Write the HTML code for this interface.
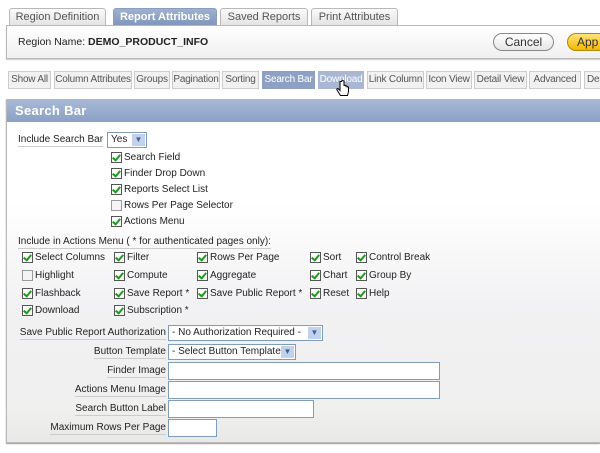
<!DOCTYPE html>
<html><head><meta charset="utf-8"><style>
*{box-sizing:border-box;margin:0;padding:0}
html,body{width:600px;height:453px;overflow:hidden}
body{background:#fff;font-family:"Liberation Sans",Arial,sans-serif;font-size:10px;color:#222;position:relative}
.a{position:absolute;white-space:nowrap}
.tab{position:absolute;top:8px;height:18px;border:1px solid #b8b8b8;border-bottom:none;border-radius:3px 3px 0 0;background:linear-gradient(#fafafa,#e2e2e2);color:#555;font-size:11px;text-align:center;line-height:17px}
.tab.on{background:linear-gradient(#9fb1cf,#7f95bb);color:#fff;font-weight:bold;border-color:#8a9cc0}
.hdr{position:absolute;left:6px;top:25px;width:594px;height:34px;border:1px solid #b8b8b8;border-right:none;background:linear-gradient(#fff,#f0f0f0);box-shadow:0 1px 1px #ccc}
.st{position:absolute;top:71px;height:18px;border:1px solid #ccc;background:#f1f1f1;color:#555;font-size:10px;line-height:16px;text-align:center;letter-spacing:-0.2px;overflow:hidden}
.st.on{background:#8ea1c4;color:#fff;border-color:#8ea1c4}
.st.on2{background:#a9b7d3;color:#fff;border-color:#a9b7d3}
.panel{position:absolute;left:6px;top:99px;width:594px;height:344px;border:1px solid #b9b9b9;border-right:none;background:linear-gradient(#fff 0,#fff 30%,#f2f1f3 60%,#f0f0ef 90%,#e8e9e6 100%);box-shadow:0 1px 1px #999}
.ph{position:absolute;left:0;top:0;right:0;height:22px;background:linear-gradient(#a8b9d6,#8ba0c4);color:#fff;font-weight:bold;font-size:13px;line-height:22px;padding-left:8px;letter-spacing:0.3px}
.cb{position:absolute;width:11px;height:11px;border:1px solid #555;background:#fff}
.cb.k::after{content:"";position:absolute;left:2px;top:0px;width:3px;height:6px;border:solid #1a9a1a;border-width:0 2px 2px 0;transform:rotate(40deg)}
.cb.u{border-color:#999;background:#f4f4f4}
.lbl{position:absolute;border-bottom:1px solid #ccc;white-space:nowrap;font-size:10px;line-height:13px}
.r{right:434px}
.sel{position:absolute;height:16px;border:1px solid #7f9db9;background:#fff;font-size:10px;line-height:14px;padding-left:3px;white-space:nowrap}
.sel .ar{position:absolute;right:1px;top:1px;width:13px;height:12px;background:#c1d2ee;color:#4d6185;font-size:8px;text-align:center;line-height:12px}
.in{position:absolute;height:18px;border:1px solid #7f9db9;background:#fff}
</style></head><body>
<div class="tab" style="left:9px;width:97px">Region Definition</div>
<div class="tab on" style="left:113px;width:104px">Report Attributes</div>
<div class="tab" style="left:220px;width:88px">Saved Reports</div>
<div class="tab" style="left:311px;width:87px">Print Attributes</div>
<div class="hdr"></div>
<div class="a" style="left:18px;top:36px;font-size:10.5px">Region Name: <b>DEMO_PRODUCT_INFO</b></div>
<div class="a" style="left:493px;top:33px;width:61px;height:18px;border:1px solid #888;border-radius:9px;background:linear-gradient(#fff,#e6e6e6);text-align:center;line-height:16px;font-size:12px;color:#333">Cancel</div>
<div class="a" style="left:567px;top:33px;width:33px;height:18px;border:1px solid #b08a00;border-right:none;border-radius:9px 0 0 9px;background:linear-gradient(#ffe27a,#f3b800);line-height:16px;font-size:12px;color:#333;padding-left:9px;overflow:hidden">App</div>

<div class="st" style="left:8px;width:43px">Show All</div>
<div class="st" style="left:54px;width:78px">Column Attributes</div>
<div class="st" style="left:134px;width:36px">Groups</div>
<div class="st" style="left:172px;width:48px">Pagination</div>
<div class="st" style="left:222px;width:37px">Sorting</div>
<div class="st on" style="left:262px;width:53px">Search Bar</div>
<div class="st on2" style="left:318px;width:46px">Download</div>
<div class="st" style="left:367px;width:57px">Link Column</div>
<div class="st" style="left:426px;width:46px">Icon View</div>
<div class="st" style="left:474px;width:53px">Detail View</div>
<div class="st" style="left:529px;width:52px">Advanced</div>
<div class="st" style="left:584px;width:16px;text-align:left;padding-left:2px;border-right:none">Des</div>
<svg class="a" style="left:336px;top:80px" width="14" height="20" viewBox="0 0 14 20"><path d="M4 1.5v9l-1.5-1.5c-1-1-2.3 0-1.5 1l3.5 5.5h7l1-4v-4c0-1-1.5-1-1.5 0v-1c0-1-1.5-1-1.5 0v-.5c0-1-1.5-1-1.5 0V1.5c0-1.200-2.5-1.200-2.5 0z" fill="#fff" stroke="#000" stroke-width="1"/></svg>

<div class="panel"><div class="ph">Search Bar</div></div>

<div class="lbl" style="left:18px;top:133px">Include Search Bar</div>
<div class="sel" style="left:107px;top:132px;width:40px">Yes<span class="ar">&#9660;</span></div>

<div class="cb k" style="left:111px;top:152px"></div><div class="a" style="left:124px;top:152px">Search Field</div>
<div class="cb k" style="left:111px;top:168px"></div><div class="a" style="left:124px;top:168px">Finder Drop Down</div>
<div class="cb k" style="left:111px;top:184px"></div><div class="a" style="left:124px;top:184px">Reports Select List</div>
<div class="cb u" style="left:111px;top:200px"></div><div class="a" style="left:124px;top:200px">Rows Per Page Selector</div>
<div class="cb k" style="left:111px;top:216px"></div><div class="a" style="left:124px;top:216px">Actions Menu</div>

<div class="lbl" style="left:18px;top:235px">Include in Actions Menu ( * for authenticated pages only):</div>

<div class="cb k" style="left:22px;top:252px"></div><div class="a" style="left:35px;top:252px">Select Columns</div>
<div class="cb k" style="left:114px;top:252px"></div><div class="a" style="left:127px;top:252px">Filter</div>
<div class="cb k" style="left:197px;top:252px"></div><div class="a" style="left:210px;top:252px">Rows Per Page</div>
<div class="cb k" style="left:310px;top:252px"></div><div class="a" style="left:323px;top:252px">Sort</div>
<div class="cb k" style="left:356px;top:252px"></div><div class="a" style="left:369px;top:252px">Control Break</div>

<div class="cb u" style="left:22px;top:270px"></div><div class="a" style="left:35px;top:270px">Highlight</div>
<div class="cb k" style="left:114px;top:270px"></div><div class="a" style="left:127px;top:270px">Compute</div>
<div class="cb k" style="left:197px;top:270px"></div><div class="a" style="left:210px;top:270px">Aggregate</div>
<div class="cb k" style="left:310px;top:270px"></div><div class="a" style="left:323px;top:270px">Chart</div>
<div class="cb k" style="left:356px;top:270px"></div><div class="a" style="left:369px;top:270px">Group By</div>

<div class="cb k" style="left:22px;top:288px"></div><div class="a" style="left:35px;top:288px">Flashback</div>
<div class="cb k" style="left:114px;top:288px"></div><div class="a" style="left:127px;top:288px">Save Report *</div>
<div class="cb k" style="left:197px;top:288px"></div><div class="a" style="left:210px;top:288px">Save Public Report *</div>
<div class="cb k" style="left:310px;top:288px"></div><div class="a" style="left:323px;top:288px">Reset</div>
<div class="cb k" style="left:356px;top:288px"></div><div class="a" style="left:369px;top:288px">Help</div>

<div class="cb k" style="left:22px;top:305px"></div><div class="a" style="left:35px;top:305px">Download</div>
<div class="cb k" style="left:114px;top:305px"></div><div class="a" style="left:127px;top:305px">Subscription *</div>

<div class="lbl r" style="top:326px">Save Public Report Authorization</div>
<div class="sel" style="left:168px;top:325px;width:155px">- No Authorization Required -<span class="ar">&#9660;</span></div>
<div class="lbl r" style="top:345px">Button Template</div>
<div class="sel" style="left:168px;top:344px;width:128px">- Select Button Template -<span class="ar">&#9660;</span></div>
<div class="lbl r" style="top:364px">Finder Image</div>
<div class="in" style="left:168px;top:362px;width:272px"></div>
<div class="lbl r" style="top:383px">Actions Menu Image</div>
<div class="in" style="left:168px;top:381px;width:272px"></div>
<div class="lbl r" style="top:402px">Search Button Label</div>
<div class="in" style="left:168px;top:400px;width:146px"></div>
<div class="lbl r" style="top:421px">Maximum Rows Per Page</div>
<div class="in" style="left:168px;top:419px;width:49px"></div>
</body></html>
